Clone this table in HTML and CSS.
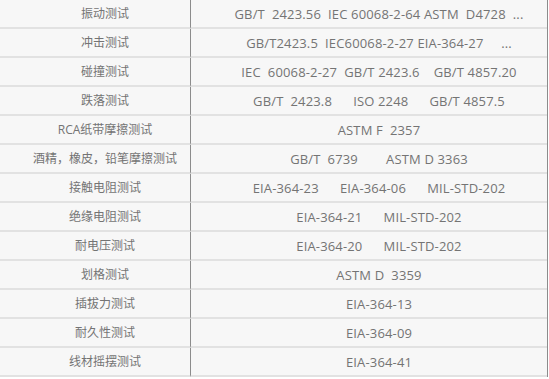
FILE: index.html
```html
<!DOCTYPE html>
<html lang="zh-CN">
<head>
<meta charset="utf-8">
<title>测试标准</title>
<link rel="stylesheet" href="styles.css">
</head>
<body>
<table class="std-table">
  <tbody>
    <tr><td class="name">振动测试</td><td class="std">GB/T  2423.56  IEC 60068-2-64 ASTM  D4728  ...</td></tr>
    <tr><td class="name">冲击测试</td><td class="std">GB/T2423.5  IEC60068-2-27 EIA-364-27     ...</td></tr>
    <tr><td class="name">碰撞测试</td><td class="std">IEC  60068-2-27  GB/T 2423.6    GB/T 4857.20</td></tr>
    <tr><td class="name">跌落测试</td><td class="std">GB/T  2423.8      ISO 2248      GB/T 4857.5</td></tr>
    <tr><td class="name">RCA纸带摩擦测试</td><td class="std">ASTM F  2357</td></tr>
    <tr><td class="name">酒精，橡皮，铅笔摩擦测试</td><td class="std">GB/T  6739        ASTM D 3363</td></tr>
    <tr><td class="name">接触电阻测试</td><td class="std">EIA-364-23      EIA-364-06      MIL-STD-202</td></tr>
    <tr><td class="name">绝缘电阻测试</td><td class="std">EIA-364-21      MIL-STD-202</td></tr>
    <tr><td class="name">耐电压测试</td><td class="std">EIA-364-20      MIL-STD-202</td></tr>
    <tr><td class="name">划格测试</td><td class="std">ASTM D  3359</td></tr>
    <tr><td class="name">插拔力测试</td><td class="std">EIA-364-13</td></tr>
    <tr><td class="name">耐久性测试</td><td class="std">EIA-364-09</td></tr>
    <tr><td class="name">线材摇摆测试</td><td class="std">EIA-364-41</td></tr>
  </tbody>
</table>
</body>
</html>
```

FILE: styles.css
```css
html, body {
  margin: 0;
  padding: 0;
  background: #ffffff;
}

.std-table {
  width: 548px;
  border-collapse: separate;
  border-spacing: 0;
  background: #f7f7f7;
  font-family: "Open Sans", "Noto Sans CJK SC", sans-serif;
  font-size: 12px;
  color: #747474;
  border-right: 1px solid #8c8c8c;
}

.std-table td {
  height: 29px;
  padding: 0 0 0 20px;
  text-align: center;
  vertical-align: middle;
  border-bottom: 2px solid #e2e2e2;
  white-space: pre;
  line-height: 16px;
  box-sizing: border-box;
}

.std-table td.name {
  width: 191px;
  border-right: 1px solid #8c8c8c;
}

.std-table td.std {
  font-size: 13px;
  letter-spacing: 0.15px;
}
```
